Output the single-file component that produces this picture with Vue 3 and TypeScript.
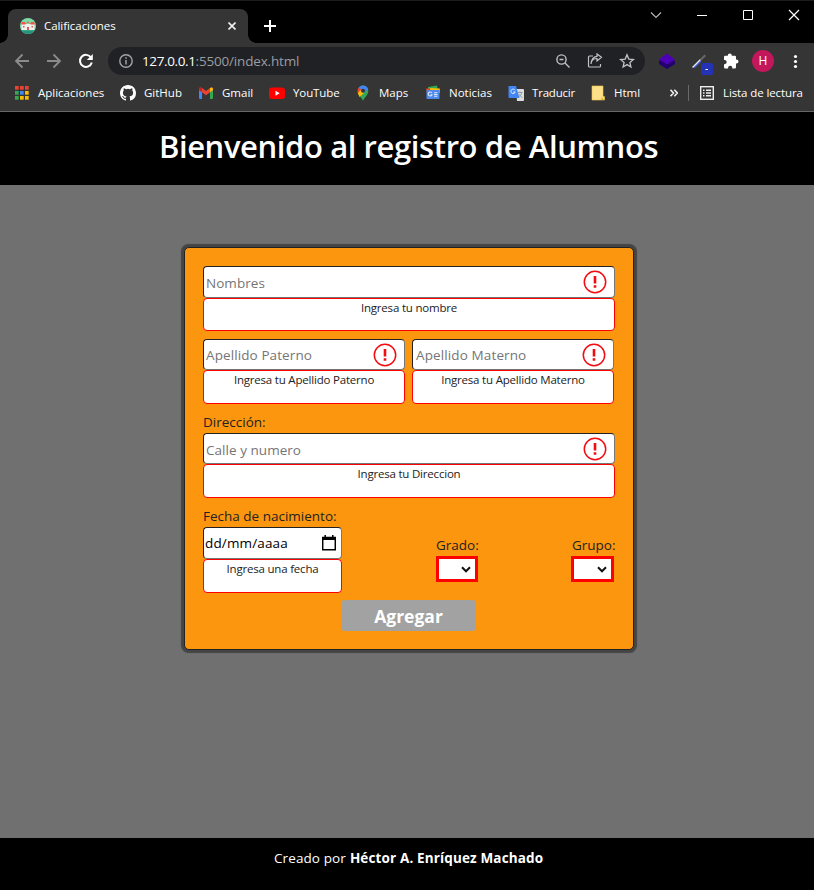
<script setup lang="ts">
interface Bookmark { id: string; label: string }

const bookmarks: Bookmark[] = [
  { id: 'apps', label: 'Aplicaciones' },
  { id: 'github', label: 'GitHub' },
  { id: 'gmail', label: 'Gmail' },
  { id: 'youtube', label: 'YouTube' },
  { id: 'maps', label: 'Maps' },
  { id: 'news', label: 'Noticias' },
  { id: 'translate', label: 'Traducir' },
  { id: 'note', label: 'Html' },
]
const dots: string[] = ['#ea4335', '#ea4335', '#ea4335', '#34a853', '#4285f4', '#fbbc05', '#34a853', '#fbbc05', '#fbbc05']
</script>

<template>
  <div class="window">
    <header class="tabs">
      <div class="tab">
        <svg class="favicon" width="16" height="16" viewBox="0 0 16 16">
          <circle cx="8" cy="8" r="8" fill="#7edca5" />
          <path d="M1.3 12.3h13.4A8 8 0 0 1 1.3 12.3z" fill="#24947c" />
          <path d="M1.5 6h13v6h-13z" fill="#efeff0" />
          <path d="M1 6.5 2 4h3l1 2 2-3 2 3 1-2h3l1 2.5H11L8 4.8 5 6.500z" fill="#ee5549" />
          <path d="M7 9h2v3H7zM3 8h1.500v1.500H3zM11.500 8H13v1.500h-1.500z" fill="#db5b4d" />
        </svg>
        <span class="t tab-title">Calificaciones</span>
        <svg class="tab-close" width="8" height="8" viewBox="0 0 8 8"><path d="M.5.5l7 7m0-7l-7 7" stroke="#eee" stroke-width="1.6" /></svg>
      </div>
      <svg class="plus" width="12" height="12" viewBox="0 0 12 12"><path d="M6 0v12M0 6h12" stroke="#fff" stroke-width="2" /></svg>
      <svg class="controls" width="150" height="12" viewBox="650 9 150 12" fill="none" stroke="#fff">
        <path d="M651 12.500l5 5 5-5" stroke="#b5b5b5" stroke-width="1.200" />
        <path d="M697 15.500h10" />
        <path d="M743.500 10.500h9v9h-9z" />
        <path d="M789 10l10 10m0-10l-10 10" stroke-width="1.200" />
      </svg>
    </header>

    <div class="toolbar">
      <svg class="nav" width="82" height="16" viewBox="14 53 82 16" fill="none" stroke-width="1.800">
        <path d="M29 61H16m6.500-6.500L16 61l6.500 6.500M47 61h13m-6.500-6.500L60 61l-6.500 6.500" stroke="#8b8b8b" />
        <path d="M91 57.500a6 6 0 1 0 .8 5" stroke="#fff" stroke-width="2" />
        <path d="M92.800 54v6h-6z" fill="#fff" />
      </svg>
      <div class="omnibox">
        <svg width="14" height="14" viewBox="0 0 14 14" fill="none" stroke="#a0a3a7"><circle cx="7" cy="7" r="6.200" stroke-width="1.400" /><path d="M7 6v4.500M7 3.300v1.500" stroke-width="1.500" /></svg>
        <span class="url"><span class="t host">127.0.0.1</span><span class="t path">:5500/index.html</span></span>
        <svg class="omni-icons" width="80" height="16" viewBox="555 53 80 16" fill="none" stroke="#c0c2c5" stroke-width="1.400">
          <circle cx="561.500" cy="59.500" r="4.600" /><path d="M565 63l4.500 4.500M559.500 59.500h4" />
          <path d="M593 56h-3.500a1 1 0 0 0-1 1v9a1 1 0 0 0 1 1h10a1 1 0 0 0 1-1v-2M591 64c.3-3.500 2.500-5.500 6-5.500V61l4.500-3.700-4.500-3.400V56.300c-3.500.5-5.700 3-6 7.700z" stroke-width="1.200" />
          <path d="M627 54.800l1.800 4.300 4.600.4-3.500 3 1 4.500-3.900-2.400-3.900 2.400 1-4.500-3.500-3 4.600-.4z" stroke-width="1.300" />
        </svg>
      </div>
      <svg class="exts" width="146" height="26" viewBox="656 48 146 26">
        <path d="M659 61l8-4.500 8 4.500v3l-8 5-8-5z" fill="#24006f" />
        <path d="M659 59.500l8-6 8 6-8 5z" fill="#4d00b8" />
        <path d="M693 67l7-7 1.500 1.500-6.500 6.500z" fill="#3f5bd0" />
        <path d="M692.500 67.500l8-8" stroke="#e8eaf5" stroke-width="1.300" />
        <path d="M700 59l4.500-4.500 1.500 1.500-4.500 4.500z" fill="#666" />
        <rect x="701" y="63" width="12" height="12" rx="2" fill="#2432b5" /><path d="M705.500 69.500h2.500" stroke="#fff" />
        <path d="M736 58.500V57a1.200 1.200 0 0 0-1.200-1.200H731.800V55.500a2 2 0 0 0-4 0v.3H725.200a1.200 1.200 0 0 0-1.200 1.200v3h.6a2.100 2.100 0 0 1 0 4.200H724v3a1.200 1.200 0 0 0 1.200 1.200h2.900V67.800a2.100 2.100 0 0 1 4.200 0v.6h2.500a1.200 1.200 0 0 0 1.200-1.200V63.500h.5a2 2 0 0 0 0-4H736z" fill="#fff" />
        <circle cx="763" cy="61" r="11" fill="#c2185b" />
        <text x="763" y="65.300" text-anchor="middle" class="avatar">H</text>
        <g fill="#fff"><circle cx="795.500" cy="56.500" r="1.600" /><circle cx="795.500" cy="61.500" r="1.600" /><circle cx="795.500" cy="66.500" r="1.600" /></g>
      </svg>
    </div>

    <nav class="bookmarks">
      <div v-for="b in bookmarks" :key="b.id" class="bookmark" :class="b.id">
        <svg width="16" height="16" viewBox="0 0 16 16">
          <template v-if="b.id === 'apps'"><rect v-for="(c, i) in dots" :key="i" :x="1 + (i % 3) * 5" :y="1 + Math.floor(i / 3) * 5" width="3.700" height="3.700" :fill="c" /></template>
          <path v-else-if="b.id === 'github'" fill="#fff" d="M8 0C3.580 0 0 3.580 0 8c0 3.540 2.290 6.530 5.470 7.590.4.070.55-.17.55-.38 0-.19-.01-.82-.01-1.490-2.010.37-2.530-.49-2.690-.94-.09-.23-.48-.94-.82-1.130-.28-.15-.68-.52-.01-.53.63-.01 1.080.58 1.230.82.72 1.210 1.870.87 2.330.66.070-.52.28-.87.51-1.070-1.780-.2-3.640-.89-3.640-3.950 0-.87.31-1.590.82-2.150-.08-.2-.36-1.020.08-2.120 0 0 .67-.21 2.200.82a7.600 7.600 0 0 1 4 0c1.530-1.040 2.200-.82 2.200-.82.44 1.100.16 1.920.08 2.120.51.56.82 1.270.82 2.150 0 3.070-1.870 3.750-3.650 3.950.29.25.54.73.54 1.480 0 1.070-.01 1.930-.01 2.200 0 .21.15.46.55.38A8.010 8.010 0 0 0 16 8c0-4.420-3.580-8-8-8z" />
          <template v-else-if="b.id === 'gmail'"><path d="M1 4h3v10H2a1 1 0 0 1-1-1z" fill="#4285f4" /><path d="M12 4h3v9a1 1 0 0 1-1 1h-2z" fill="#34a853" /><path d="M1 5V4c0-1.700 1.700-2 3-1l4 3 4-3c1.300-1 3-.7 3 1v1L8 10.300z" fill="#ea4335" /><path d="M12 3c1.300-1 3-.7 3 1v1l-3 2.200z" fill="#fbbc05" /><path d="M1 5V4c0-1.700 1.700-2 3-1v4.200z" fill="#c5221f" /></template>
          <template v-else-if="b.id === 'youtube'"><rect y="2.500" width="16" height="11.500" rx="3" fill="#f00" /><path d="M6.500 5.800v5L10.700 8.300z" fill="#fff" /></template>
          <template v-else-if="b.id === 'maps'"><path d="M8 16c-.6-3-5.300-5.500-5.300-10.300A5.300 5.300 0 0 1 8 .5a5.300 5.300 0 0 1 5.300 5.200C13.300 10.500 8.600 13 8 16z" fill="#34a853" /><path d="M8 .5a5.300 5.300 0 0 1 5 3.700L8 9 3.800 2.500A5.300 5.300 0 0 1 8 .5z" fill="#4285f4" /><path d="M3.800 2.500l3 2.500-4 3.500C2.300 6 2.800 3.700 3.800 2.500z" fill="#ea4335" /><path d="M2.800 8L7 4l2 4-4.500 4z" fill="#fbbc05" /><circle cx="8" cy="5.800" r="2" fill="#353535" /></template>
          <template v-else-if="b.id === 'news'"><path d="M3 2l9-1.500 1 6H3z" fill="#34a853" /><path d="M1 3.500l7 .5v4H2z" fill="#ea4335" /><path d="M5 3l9.800.5V8H6z" fill="#fbbc05" /><rect x="1.500" y="5" width="13" height="9" rx=".7" fill="#4b89ed" /><path d="M6.900 8A2 2 0 1 0 7 9.800H5.500M9 7.800h3.500M9 9.500h3.500M9 11.200h3.500" fill="none" stroke="#dce8ff" stroke-width="1.100" /></template>
          <template v-else-if="b.id === 'translate'"><path d="M8 4h7a1 1 0 0 1 1 1v10a1 1 0 0 1-1 1H9z" fill="#ddd" /><path d="M.8 1h7.200l3.500 12H1.500a1 1 0 0 1-1-1V1.500z" fill="#4285f4" /><path d="M7 5.300A2.200 2.200 0 1 0 7.200 7H5.200" fill="none" stroke="#e9f0ff" /><path d="M9.500 7.500h5M12 6.500v1M13.700 7.500c-.5 2.500-2 4-3.200 4.500M10.500 9l4 4" fill="none" stroke="#78909c" stroke-width=".8" /></template>
          <template v-else><path d="M2 1h11v10.500h1.500V15H2z" fill="#fde18a" stroke="#eec54a" stroke-width=".6" /><path d="M11.500 12v3H14z" fill="#dda923" /></template>
        </svg>
        <span class="t">{{ b.label }}</span>
      </div>
      <svg class="more" width="8" height="8" viewBox="0 0 8 8" fill="none" stroke="#eee" stroke-width="1.600"><path d="M.5.8L3.500 4l-3 3.200M4.300.8L7.300 4l-3 3.200" /></svg>
      <i class="divider"></i>
      <svg class="list-icon" width="14" height="14" viewBox="0 0 14 14" fill="none" stroke="#eee"><rect x=".7" y=".7" width="12.600" height="12.600" stroke-width="1.400" /><path d="M3 4.200h1.500M3 7h1.500M3 9.800h1.500M6 4.200h5M6 7h5M6 9.800h5" stroke-width="1.400" /></svg>
      <span class="t reading">Lista de lectura</span>
    </nav>

    <div class="hero"><h1 class="t">Bienvenido al registro de Alumnos</h1></div>

    <main>
      <form class="card" @submit.prevent>
        <div class="field wide">
          <div class="input tall low"><span class="t ph">Nombres</span><svg class="warn" viewBox="0 0 24 24"><circle cx="12" cy="12" r="10.700" /><path d="M12 6v7.500M12 15.200v2.500" /></svg></div>
          <div class="error short"><span class="t">Ingresa tu nombre</span></div>
        </div>
        <div class="pair">
          <div class="field">
            <div class="input"><span class="t ph">Apellido Paterno</span><svg class="warn" viewBox="0 0 24 24"><circle cx="12" cy="12" r="10.700" /><path d="M12 6v7.500M12 15.200v2.500" /></svg></div>
            <div class="error"><span class="t">Ingresa tu Apellido Paterno</span></div>
          </div>
          <div class="field maternal">
            <div class="input"><span class="t ph">Apellido Materno</span><svg class="warn" viewBox="0 0 24 24"><circle cx="12" cy="12" r="10.700" /><path d="M12 6v7.500M12 15.200v2.500" /></svg></div>
            <div class="error"><span class="t">Ingresa tu Apellido Materno</span></div>
          </div>
        </div>
        <label class="address"><span class="t">Dirección:</span></label>
        <div class="field wide">
          <div class="input low"><span class="t ph">Calle y numero</span><svg class="warn" viewBox="0 0 24 24"><circle cx="12" cy="12" r="10.700" /><path d="M12 6v7.500M12 15.200v2.500" /></svg></div>
          <div class="error"><span class="t">Ingresa tu Direccion</span></div>
        </div>
        <div class="bottom">
          <div class="date">
            <label><span class="t">Fecha de nacimiento:</span></label>
            <div class="input tall"><span class="t value">dd/mm/aaaa</span><svg class="calendar" width="14" height="16" viewBox="0 0 14 16"><path d="M.7 2.500h12.600v12.300H.7zM.7 4h12.600M3.200 0v3M10.800 0v3" fill="none" stroke="#000" stroke-width="1.500" /><path d="M1 2.500h12v2.500H1z" /></svg></div>
            <div class="error"><span class="t">Ingresa una fecha</span></div>
          </div>
          <div class="pick grade">
            <label><span class="t">Grado:</span></label>
            <div class="select"><svg width="10" height="7" viewBox="0 0 10 7"><path d="M1 1.300l4 4 4-4" fill="none" stroke="#111" stroke-width="2" /></svg></div>
          </div>
          <div class="pick group">
            <label><span class="t">Grupo:</span></label>
            <div class="select"><svg width="10" height="7" viewBox="0 0 10 7"><path d="M1 1.300l4 4 4-4" fill="none" stroke="#111" stroke-width="2" /></svg></div>
          </div>
        </div>
        <button type="button">Agregar</button>
      </form>
    </main>
    <footer><span class="t by">Creado por</span><b class="t author">Héctor A. Enríquez Machado</b></footer>
  </div>
</template>

<style>
body { margin: 0; background: #000; }
</style>

<style scoped>
* { box-sizing: border-box; }
svg { display: block; flex: none; }
.t { white-space: nowrap; }
.window { width: 814px; height: 890px; overflow: hidden; display: flex; flex-direction: column; font: 11.5px/16px "Open Sans", "Noto Sans", sans-serif; color: #fff; }
.tabs { height: 43px; flex: none; display: flex; background: #000; border-top: 1px solid #1b1b1b; padding: 8px 0 0 8px; }
.tab { position: relative; width: 240px; height: 34px; background: #353535; border-radius: 8px 8px 0 0; display: flex; align-items: center; padding: 0 12px; }
.tab::before, .tab::after { content: ""; position: absolute; bottom: 0; width: 8px; height: 8px; }
.tab::before { left: -8px; background: radial-gradient(circle at 0 0, transparent 7.5px, #353535 8px); }
.tab::after { right: -8px; background: radial-gradient(circle at 100% 0, transparent 7.5px, #353535 8px); }
.tab-title { margin-left: 8px; letter-spacing: -.06px; }
.tab-close { margin-left: auto; }
.plus { margin: 11px 0 0 16px; }
.controls { margin: 0 14px 0 auto; }
.toolbar { height: 36px; flex: none; background: #353535; display: flex; align-items: center; padding-left: 14px; }
.omnibox { width: 537px; height: 28px; border-radius: 14px; background: #202124; margin-left: 12px; display: flex; align-items: center; padding: 0 10px 0 11px; }
.url { margin-left: 9px; font-size: 13.5px; line-height: 20px; }
.host { letter-spacing: -.38px; }
.path { color: #9a9da1; letter-spacing: -.18px; }
.omni-icons { margin-left: auto; }
.exts { margin-left: 11px; overflow: visible; }
.avatar { font: 12px "Open Sans", sans-serif; fill: #fff; }
.bookmarks { height: 33px; flex: none; background: #353535; border-bottom: 1px solid #656565; display: flex; align-items: center; padding: 0 0 4px 14px; }
.bookmark { display: flex; gap: 8px; width: 82px; flex: none; }
.bookmark.apps { width: 106px; }
.bookmark.github { width: 78px; }
.bookmark.gmail { width: 71px; }
.bookmark.youtube { width: 86px; letter-spacing: -.1px; }
.bookmark.maps { width: 70px; }
.bookmark.news { width: 83px; }
.bookmark.translate { letter-spacing: -.2px; }
.bookmark.note { width: 80px; }
.divider { width: 1px; height: 16px; background: #696969; margin: 0 11px 0 10px; }
.reading { margin-left: 9px; letter-spacing: -.1px; }
.hero { height: 73px; flex: none; background: #000; text-align: center; }
h1 { margin: 0 0 0 3px; font-size: 31px; font-weight: 600; line-height: 69px; letter-spacing: -.4px; }
main { height: 653px; flex: none; background: #707070; padding-top: 62px; }
.card { width: 450px; height: 403px; margin-left: 184px; background: #fc960f; border: 1px solid #222; border-radius: 5px; box-shadow: 0 0 1px 2.500px #444; padding: 18px; color: #222; font-size: 13.5px; }
.field { width: 412px; }
.input { height: 31px; background: #fff; border: 1px solid; border-color: #222 #767676 #767676 #222; border-radius: 4px; display: flex; align-items: center; justify-content: space-between; padding: 0 7px 0 2px; }
.tall { height: 32px; }
.wide .input { padding-right: 7.5px; }
.ph { color: #757575; letter-spacing: .1px; }
.low .ph { padding-top: 2px; letter-spacing: .04px; }
.maternal .ph { padding-left: 1px; letter-spacing: .12px; }
.error { height: 34px; border: 1px solid #f00; border-radius: 4px; background: #fff; text-align: center; font-size: 11.5px; line-height: 18px; letter-spacing: -.2px; }
.error.short { height: 33px; }
.warn { width: 24px; height: 24px; fill: none; stroke: #f20c10; stroke-width: 1.500; }
.warn path { stroke-width: 2.600; }
.pair { display: flex; gap: 7px; margin-top: 8px; }
.pair .field { width: 202px; }
label { display: block; height: 19px; line-height: 17px; }
.address { margin-top: 10px; }
.bottom { display: flex; margin-top: 10px; }
.date { width: 139px; }
.date .input { padding: 0 5px 0 1px; }
.value { color: #000; letter-spacing: .15px; }
.pick { margin-top: 29px; }
.grade { width: 42px; margin-left: 94px; }
.group { width: 43px; margin-left: 93px; }
.select { height: 26px; background: #fff; border: 3px solid #f00; display: flex; justify-content: flex-end; align-items: center; padding-right: 4px; }
.group label { padding-left: 1px; }
button { display: block; width: 135px; height: 31px; margin: 7px 0 0 138px; border: 0; border-radius: 4px; background: #a2a2a2; color: #fff; font: bold 17.5px "Open Sans", sans-serif; padding: 0; }
footer { height: 52px; background: #000; font-size: 13.5px; line-height: 40px; display: flex; padding-left: 274px; gap: 4px; }
.by { letter-spacing: .1px; }
.author { letter-spacing: .14px; }
</style>
